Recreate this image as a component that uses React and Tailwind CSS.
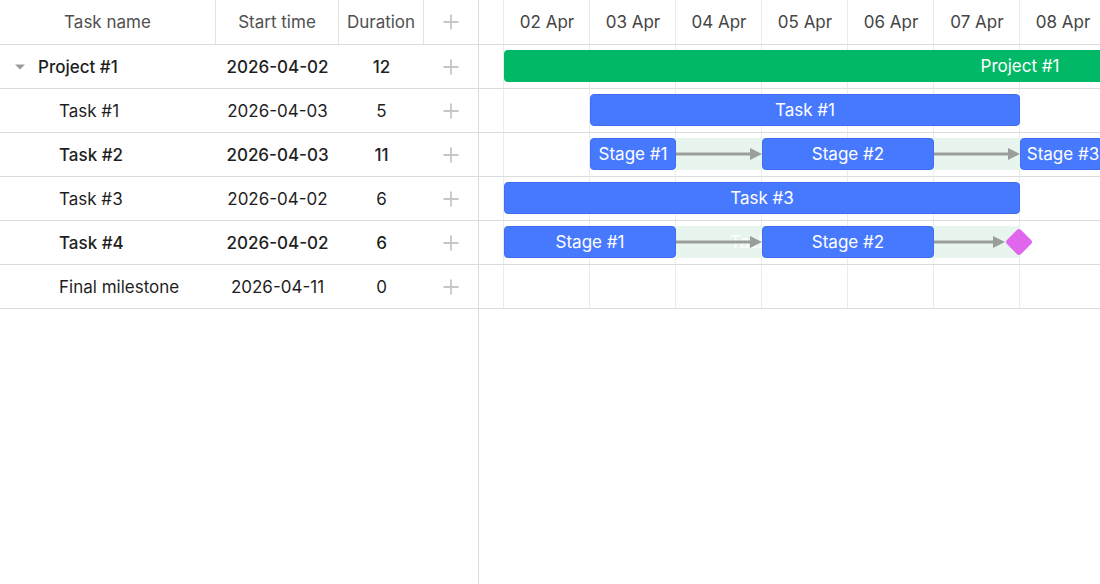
import React from 'react';

const DAY = 86;
// timeline starts one day before 02 Apr, scrolled so 02 Apr sits 25px in
const OFFSET = -61;

const days = ['', '02 Apr', '03 Apr', '04 Apr', '05 Apr', '06 Apr', '07 Apr', '08 Apr', '09 Apr'];

const rows = [
  { id: 1, name: 'Project #1', start: '2026-04-02', duration: 12, level: 0, parent: true, open: true },
  { id: 2, name: 'Task #1', start: '2026-04-03', duration: 5, level: 1 },
  { id: 3, name: 'Task #2', start: '2026-04-03', duration: 11, level: 1, parent: true },
  { id: 4, name: 'Task #3', start: '2026-04-02', duration: 6, level: 1 },
  { id: 5, name: 'Task #4', start: '2026-04-02', duration: 6, level: 1, parent: true },
  { id: 6, name: 'Final milestone', start: '2026-04-11', duration: 0, level: 1 },
];

// day index from 01 Apr -> px
const x = (d) => d * DAY;

function AddIcon() {
  return (
    <svg width="16" height="16" viewBox="0 0 16 16" className="text-[#c6c6c6]">
      <path d="M8 0.5 V15.5 M0.5 8 H15.5" stroke="currentColor" strokeWidth="1.8" />
    </svg>
  );
}

function Arrow({ w = DAY }) {
  return (
    <svg width={w} height="14" viewBox={`0 0 ${w} 14`} className="shrink-0">
      <line x1="0" y1="7" x2={w - 10} y2="7" stroke="#9a9f9c" strokeWidth="3" />
      <path d={`M${w - 12} 1 L${w} 7 L${w - 12} 13 Z`} fill="#9a9f9c" />
    </svg>
  );
}

function Block({ days: n, children, green }) {
  return (
    <div
      className={`h-[32px] pt-[2px] shrink-0 rounded-[4px] flex items-center justify-center text-white whitespace-nowrap ${
        green ? 'bg-[#00b865]' : 'bg-[#4779ff] border border-[#3f6fee]'
      }`}
      style={{ width: x(n) }}
    >
      {children}
    </div>
  );
}

// a task placed on the time scale; its stages flow inside it
function Track({ from, len, band, label, children }) {
  return (
    <div
      className={`absolute top-[5px] h-[32px] flex items-center ${band ? 'bg-[#e8f5ee]' : ''}`}
      style={{ left: x(from), width: x(len) }}
    >
      {label && (
        <span className="absolute inset-0 pt-[2px] flex items-center justify-center text-white whitespace-nowrap">
          {label}
        </span>
      )}
      <div className="relative flex items-center">{children}</div>
    </div>
  );
}

function Milestone() {
  return (
    <div className="w-[30px] h-[32px] shrink-0 flex items-center justify-center -ml-[1px]">
      <div className="w-[20px] h-[20px] rotate-45 rounded-[3px] bg-[#e066ee]" />
    </div>
  );
}

const timeline = {
  1: (
    <Track from={1} len={12}>
      <Block days={12} green>Project #1</Block>
    </Track>
  ),
  2: (
    <Track from={2} len={5}>
      <Block days={5}>Task #1</Block>
    </Track>
  ),
  3: (
    <Track from={2} len={11} band>
      <Block days={1}>Stage #1</Block>
      <Arrow />
      <Block days={2}>Stage #2</Block>
      <Arrow />
      <Block days={1}>Stage #3</Block>
    </Track>
  ),
  4: (
    <Track from={1} len={6}>
      <Block days={6}>Task #3</Block>
    </Track>
  ),
  5: (
    <Track from={1} len={6} band label="Task #4">
      <Block days={2}>Stage #1</Block>
      <Arrow />
      <Block days={2}>Stage #2</Block>
      <Arrow w={71} />
      <Milestone />
    </Track>
  ),
  6: null,
};

export default function App() {
  return (
    <div className="w-[1100px] h-[584px] flex overflow-hidden bg-white text-[17px] text-[#1f1f1f] font-['Inter',sans-serif]">
      {/* grid */}
      <div className="w-[479px] shrink-0 border-r border-[#dcdcdc]">
        <div className="h-[45px] flex border-b border-[#dcdcdc] text-[#505050]">
          <div className="w-[216px] pt-[2px] flex items-center justify-center border-r border-[#e2e2e2]">Task name</div>
          <div className="w-[123px] pt-[2px] flex items-center justify-center border-r border-[#e2e2e2]">Start time</div>
          <div className="w-[85px] pt-[2px] flex items-center justify-center border-r border-[#e2e2e2]">Duration</div>
          <div className="flex-1 flex items-center justify-center">
            <AddIcon />
          </div>
        </div>
        {rows.map((r) => (
          <div
            key={r.id}
            className={`h-[44px] flex border-b border-[#dcdcdc] ${r.parent ? 'font-medium' : ''}`}
          >
            <div className={`w-[216px] pt-[2px] flex items-center ${r.level ? 'pl-[59px]' : 'pl-[14px]'}`}>
              {r.level === 0 && (
                <svg width="12" height="8" viewBox="0 0 12 8" className="mr-[12px] -mt-[2px]">
                  <path d="M1 1.5 L11 1.5 L6 6.5 Z" fill="#9b9b9b" />
                </svg>
              )}
              {r.name}
            </div>
            <div className="w-[123px] pt-[2px] flex items-center justify-center">{r.start}</div>
            <div className="w-[85px] pt-[2px] flex items-center justify-center">{r.duration}</div>
            <div className="flex-1 flex items-center justify-center">
              <AddIcon />
            </div>
          </div>
        ))}
      </div>

      {/* chart */}
      <div className="flex-1 overflow-hidden">
        <div className="relative" style={{ marginLeft: OFFSET, width: days.length * DAY }}>
          <div className="absolute inset-0 flex pointer-events-none">
            {days.map((d, i) => (
              <div key={i} className="w-[86px] shrink-0 border-r border-[#ebebeb]" />
            ))}
          </div>
          <div className="relative h-[45px] flex border-b border-[#dcdcdc] text-[#454545]">
            {days.map((d, i) => (
              <div key={i} className="w-[86px] pt-[2px] shrink-0 flex items-center justify-center">
                {d}
              </div>
            ))}
          </div>
          {rows.map((r) => (
            <div key={r.id} className="relative h-[44px] border-b border-[#dcdcdc]">
              {timeline[r.id]}
            </div>
          ))}
        </div>
      </div>
    </div>
  );
}
